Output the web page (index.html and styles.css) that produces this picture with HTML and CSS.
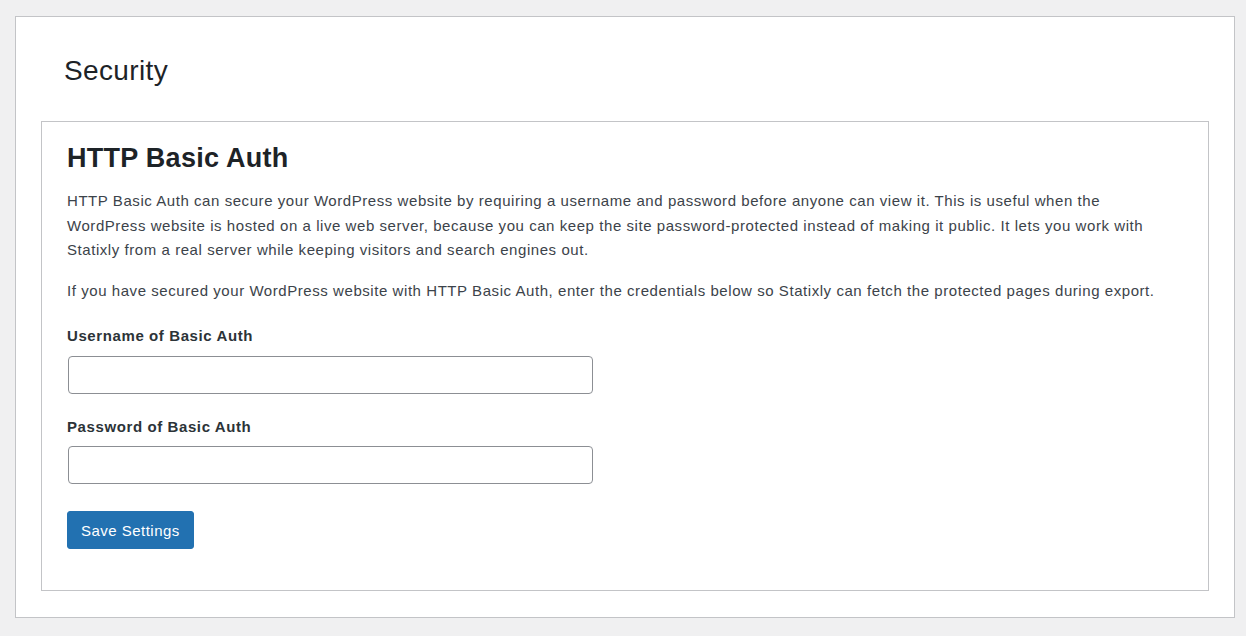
FILE: index.html
```html
<!DOCTYPE html>
<html lang="en">
<head>
  <meta charset="UTF-8" />
  <meta name="viewport" content="width=device-width, initial-scale=1.0"/>
  <title>Security</title>
  <link rel="stylesheet" href="styles.css">
</head>
<body>

  <div class="wrap">
    <h1 class="page-title">Security</h1>

    <div class="card">
      <h2>HTTP Basic Auth</h2>
      <p>HTTP Basic Auth can secure your WordPress website by requiring a username and password before anyone can view it. This is useful when the WordPress website is hosted on a live web server, because you can keep the site password-protected instead of making it public. It lets you work with Statixly from a real server while keeping visitors and search engines out.</p>
      <p>If you have secured your WordPress website with HTTP Basic Auth, enter the credentials below so Statixly can fetch the protected pages during export.</p>

      <form class="settings-form" onsubmit="return false;">
        <div class="field">
          <label for="authUser">Username of Basic Auth</label>
          <input type="text" id="authUser" />
        </div>
        <div class="field">
          <label for="authPass">Password of Basic Auth</label>
          <input type="password" id="authPass" />
        </div>
        <button type="submit" class="save-btn">Save Settings</button>
      </form>
    </div>
  </div>

</body>
</html>
```

FILE: styles.css
```css
body {
  font-family: 'Liberation Sans', Arial, sans-serif;
  background: #f0f0f1;
  color: #3c434a;
  margin: 0;
  padding: 16px 11px 19px 15px;
}

.wrap {
  background: #fff;
  border: 1px solid #c3c4c7;
  padding: 0 25px 26px;
}

.page-title {
  font-size: 28px;
  font-weight: 400;
  line-height: 36px;
  letter-spacing: 0.37px;
  color: #1d2327;
  margin: 0;
  padding: 36px 23px 32px;
}

.card {
  border: 1px solid #c3c4c7;
  padding: 19px 25px 41px;
}

.card h2 {
  font-size: 27px;
  line-height: 35px;
  letter-spacing: 0.27px;
  color: #1d2327;
  margin: 0;
}

.card p {
  max-width: 1105px;
  font-size: 15px;
  line-height: 24.5px;
  letter-spacing: 0.56px;
  margin: 13px 0 0;
}

.card p + p {
  margin-top: 16px;
}

.field {
  margin-top: 21px;
}

.field label {
  display: block;
  font-size: 15px;
  font-weight: bold;
  line-height: 24.5px;
  letter-spacing: 0.6px;
  color: #2c3338;
}

.field input {
  display: block;
  box-sizing: border-box;
  width: 525px;
  height: 38px;
  margin: 7px 0 0 1px;
  border: 1px solid #8c8f94;
  border-radius: 4px;
  padding: 0 8px;
  font-size: 15px;
  font-family: inherit;
  background: #fff;
}

.save-btn {
  display: block;
  margin-top: 27px;
  height: 38px;
  padding: 0 13px;
  background: #2271b1;
  color: #fff;
  border: 1px solid #2271b1;
  border-radius: 3px;
  font-size: 15px;
  letter-spacing: 0.48px;
  font-family: inherit;
  cursor: pointer;
}

.save-btn:hover {
  background: #135e96;
}
```
